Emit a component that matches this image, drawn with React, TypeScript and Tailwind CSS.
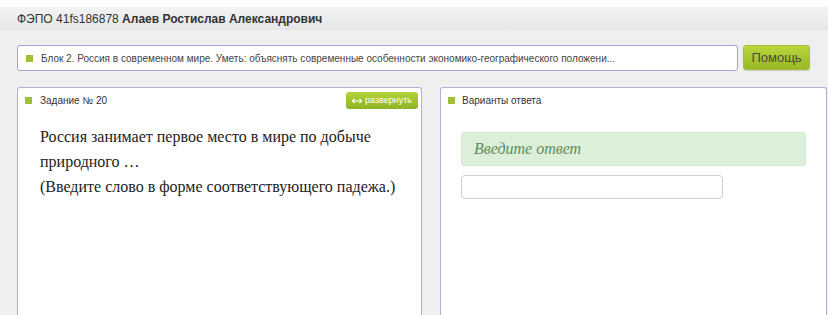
import React from "react";

function Square() {
  return <span className="inline-block w-[7px] h-[7px] bg-[#9fbf3b] shrink-0" />;
}

export default function App() {
  return (
    <div className="w-full h-[315px] bg-[#efefef] flex flex-col overflow-hidden font-['Liberation_Sans',Arial,sans-serif]">
      <div className="h-[7px] bg-white" />
      <div className="h-[23px] bg-gradient-to-b from-[#f3f3f3] to-[#e6e6e6] flex items-center px-[17px] text-[12px] text-[#333]">
        <span>ФЭПО 41fs186878&nbsp;</span>
        <span className="font-bold">Алаев Ростислав Александрович</span>
      </div>

      <div className="flex gap-[5px] px-[17px] pt-[15px] pr-[18px]">
        <div className="flex-1 h-[26px] bg-white border border-[#a8a2d0] rounded-[3px] flex items-center gap-[8px] pl-[8px] text-[10px] text-[#444]">
          <Square />
          <span>
            Блок 2. Россия в современном мире. Уметь: объяснять современные особенности экономико-географического положени...
          </span>
        </div>
        <button className="w-[67px] h-[25px] rounded-[3px] bg-gradient-to-b from-[#bad73c] to-[#96b826] border border-[#a2c030] text-[13px] text-[#4a4a38] shadow-[0_1px_1px_rgba(0,0,0,0.15)]">
          Помощь
        </button>
      </div>

      <div className="flex-1 flex gap-[18px] pl-[17px] pr-[1px] pt-[16px]">
        <div className="w-[405px] bg-white border border-b-0 border-[#b3afd6] rounded-tl-[3px] rounded-tr-[3px] flex flex-col">
          <div className="h-[36px] flex items-start pl-[7px] pr-[3px] pt-[4px]">
            <div className="flex items-center gap-[8px] h-[17px] text-[10px] text-[#333]">
              <Square />
              <span>Задание № 20</span>
            </div>
            <div className="flex-1" />
            <button className="w-[72px] h-[17px] rounded-[3px] bg-gradient-to-b from-[#b4d33c] to-[#8fb323] flex items-center justify-center gap-[3px] text-[9px] text-white">
              <svg width="10" height="6" viewBox="0 0 10 6" fill="none">
                <path d="M0.5 3h9M2.5 1L0.5 3l2 2M7.5 1l2 2-2 2" stroke="white" strokeWidth="1.2" />
              </svg>
              <span>развернуть</span>
            </button>
          </div>
          <div className="pl-[22px] pr-[10px] text-[16px] leading-[25px] text-[#222] font-['Liberation_Serif','Times_New_Roman',serif]">
            <div>Россия занимает первое место в мире по добыче</div>
            <div>природного …</div>
            <div>(Введите слово в форме соответствующего падежа.)</div>
          </div>
        </div>

        <div className="flex-1 bg-white border border-b-0 border-[#b3afd6] rounded-tl-[3px] rounded-tr-[3px] flex flex-col">
          <div className="h-[44px] pl-[7px] pt-[4px]">
            <div className="flex items-center gap-[7px] h-[17px] text-[10px] text-[#333]">
              <Square />
              <span>Варианты ответа</span>
            </div>
          </div>
          <div className="mx-[20px] h-[34px] rounded-[3px] bg-[#dcefd8] border border-[#d3e8cf] flex items-center pl-[12px] text-[16px] italic text-[#5f8c5a] font-['Liberation_Serif','Times_New_Roman',serif]">
            Введите ответ
          </div>
          <div className="ml-[20px] mt-[9px] w-[262px] h-[24px] bg-white border border-[#cfcfcf] rounded-[4px]" />
        </div>
      </div>
    </div>
  );
}
